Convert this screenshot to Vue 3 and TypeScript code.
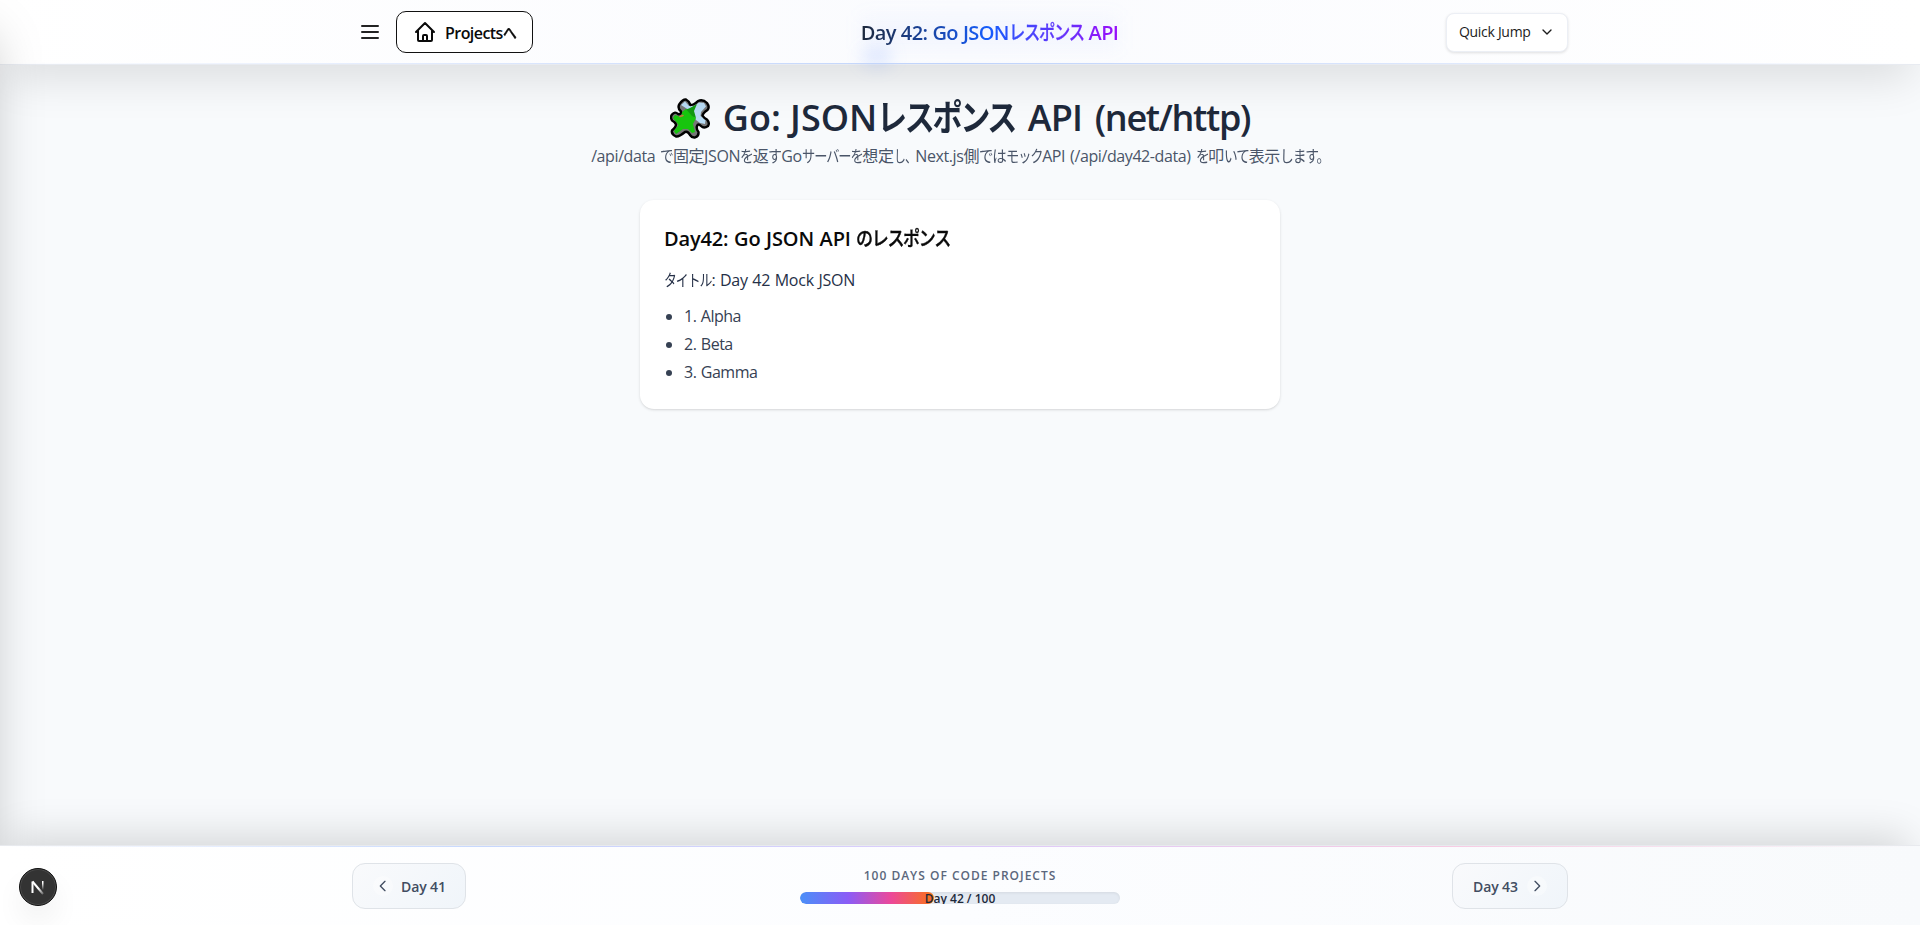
<script setup lang="ts">
import { h, type FunctionalComponent } from 'vue'

// Condensed kana run: glyphs are tightened and narrowed, `scale` is the final advance in em.
const TIGHT = 0.92
const Kana: FunctionalComponent<{ text: string; scale?: number }> = (props) => {
  const scale = props.scale ?? 0.79
  return h('span', {
    class: 'kana',
    style: {
      transform: `scaleX(${(scale / TIGHT).toFixed(3)})`,
      marginRight: `${(-(TIGHT - scale) * props.text.length).toFixed(3)}em`,
    },
  }, props.text)
}
Kana.props = { text: String, scale: Number }

const current = 42
const total = 100
const items = [
  { id: 1, name: 'Alpha' },
  { id: 2, name: 'Beta' },
  { id: 3, name: 'Gamma' },
]
</script>

<template>
  <div class="page">
    <header class="header">
      <div class="bar">
        <div class="left">
          <svg class="menu" viewBox="0 0 24 24"><path d="M4 6h16M4 12h16M4 18h16" /></svg>
          <a class="home">
            <svg viewBox="0 0 24 24"><path d="m3 12 2-2m0 0 7-7 7 7M5 10v10a1 1 0 0 0 1 1h3m10-11 2 2m-2-2v10a1 1 0 0 1-1 1h-3m-6 0a1 1 0 0 0 1-1v-4a1 1 0 0 1 1-1h2a1 1 0 0 1 1 1v4a1 1 0 0 0 1 1m-6 0h6" /></svg>
            <span class="home-text">Projects<Kana text="へ" /></span>
          </a>
        </div>
        <h1 class="brand"><span class="brand-a">Day 42: Go JSON</span><Kana class="brand-b" text="レスポンス" :scale="0.75" /><span class="brand-c">&nbsp;API</span></h1>
        <button class="jump"><span>Quick Jump</span><svg viewBox="0 0 24 24"><path d="m6 9 6 6 6-6" /></svg></button>
      </div>
    </header>
    <aside class="drawer"></aside>

    <main class="main">
      <h2 class="title">
        <svg class="puzzle" viewBox="0 0 40 41">
          <path class="side" d="M9.500 6Q13 1 16 1.500Q19 3 20.500 7Q24 7 28 3Q33 1 37 5Q40 9 37.500 12Q33 15 32.500 17.500Q34 20 37 21.500Q40 25 38 28Q34 31 31 28Q28 25 27 28Q26 31 28.500 34Q29 38 25 39.500Q22 40 20 37Q18 33 15 34Q9 39 6 38.500Q1 36 2 32.500Q6 29 6 26.500Q5 24 2 22.500Q0 19 2 16.500Q5 13 8 16Q11 17 11 13.500Q7 10 9.500 6Z" />
          <path class="sky" d="M11 7L15 3.500L19 8L24 8L29 4.500L34 5L36 8.500L31 14L30.500 18L35.500 22L35 26L30 25L26 22L22 14Z" />
          <path class="face-dark" d="M20 10L27 6L24 13L26 20L20 18L15 12Z" />
          <path class="face" d="M12 14L16 11L22 18L26 20L23 26L25 34L22 35L18 31L13 31L6 36L4 33L8.500 27L3 20L5 17L11 19Z" />
          <path class="dot" d="M10 18.500L13 17.500" />
          <path class="edge" d="M9.500 6Q13 1 16 1.500Q19 3 20.500 7Q24 7 28 3Q33 1 37 5Q40 9 37.500 12Q33 15 32.500 17.500Q34 20 37 21.500Q40 25 38 28Q34 31 31 28Q28 25 27 28Q26 31 28.500 34Q29 38 25 39.500Q22 40 20 37Q18 33 15 34Q9 39 6 38.500Q1 36 2 32.500Q6 29 6 26.500Q5 24 2 22.500Q0 19 2 16.500Q5 13 8 16Q11 17 11 13.500Q7 10 9.500 6Z" />
        </svg>
        <span>Go: JSON<Kana text="レスポンス" :scale="0.77" /><span class="tight"> API <span class="tighter">(net/http)</span></span></span>
      </h2>
      <p class="lead">/api/data <Kana text="で" />固定JSON<Kana text="を" />返<Kana text="す" :scale="0.8" />Go<Kana text="サーバーを" :scale="0.76" />想定<Kana text="し、" :scale="0.68" />Next.js側<Kana text="では" :scale="0.83" /><Kana text="モック" :scale="0.76" />API (/api/day42-data) <Kana text="を" />叩<Kana text="いて" />表示<Kana text="します。" /></p>
      <section class="card">
        <h3 class="card-title">Day42: Go JSON API <Kana text="のレスポンス" :scale="0.785" /></h3>
        <p class="card-text"><Kana text="タイトル" :scale="0.74" />: Day 42 Mock JSON</p>
        <ul class="list">
          <li v-for="item in items" :key="item.id">{{ item.id }}. {{ item.name }}</li>
        </ul>
      </section>
    </main>

    <footer class="footer">
      <div class="foot">
        <a class="nav prev"><i><svg viewBox="0 0 24 24"><path d="m15 19-7-7 7-7" /></svg></i><span>Day 41</span></a>
        <div class="progress">
          <p class="caption">100 DAYS OF CODE PROJECTS</p>
          <div class="track">
            <div class="fill" :style="{ width: (current / total) * 100 + '%' }"></div>
            <span class="count">Day {{ current }} / {{ total }}</span>
          </div>
        </div>
        <a class="nav next"><span>Day 43</span><i><svg viewBox="0 0 24 24"><path d="m9 5 7 7-7 7" /></svg></i></a>
      </div>
    </footer>
    <div class="next-badge">
      <svg viewBox="0 0 38 38">
        <defs>
          <linearGradient id="stem" x1="0" y1="12" x2="0" y2="22" gradientUnits="userSpaceOnUse"><stop offset="0.3" stop-color="#fff" /><stop offset="1" stop-color="#fff" stop-opacity="0" /></linearGradient>
          <linearGradient id="diag" x1="20" y1="20" x2="25" y2="26" gradientUnits="userSpaceOnUse"><stop offset="0" stop-color="#fff" /><stop offset="1" stop-color="#fff" stop-opacity="0.2" /></linearGradient>
        </defs>
        <path d="M13.500 25V13.500" stroke="#fff" /><path d="M13.500 13.500L24 26" stroke="url(#diag)" /><path d="M23 13h1.500v9h-1.500z" fill="url(#stem)" stroke="none" />
      </svg>
    </div>
  </div>
</template>

<style>
body { margin: 0; background: #f8fafc; overflow: hidden; }
</style>
<style scoped>
* { box-sizing: border-box; margin: 0; padding: 0; }
.page { height: 925px; display: flex; flex-direction: column; position: relative; overflow: hidden; background: #f8fafc; font-family: "Open Sans", "Noto Sans CJK JP", sans-serif; }
svg { fill: none; stroke: currentColor; stroke-width: 2; stroke-linecap: round; stroke-linejoin: round; flex: none; }
.kana { display: inline-block; transform-origin: left; letter-spacing: -.08em; }

.header { height: 65px; flex: none; background: linear-gradient(90deg, #fff, #fafbfe 50%, #fff); border-bottom: 1px solid #e8ebf1; position: relative; z-index: 2; box-shadow: 0 20px 45px -8px rgba(0, 0, 0, .125); }
.header::after { content: ""; position: absolute; left: 0; right: 0; bottom: 0; height: 1px; background: linear-gradient(90deg, transparent, #bfd3fb 50%, transparent); }
.bar { width: 1216px; height: 64px; margin: 0 auto; display: flex; align-items: center; justify-content: space-between; }
.left { display: flex; align-items: center; gap: 14px; }
.menu { width: 24px; height: 24px; margin-left: 6px; color: #222; }
.home { height: 42px; width: 137px; border: 1px solid #111; border-radius: 10px; background: #fff; display: flex; align-items: center; padding-left: 16px; gap: 8px; font-size: 16px; font-weight: 600; color: #0a0a0a; }
.home svg { width: 24px; height: 24px; }
.home-text { white-space: nowrap; letter-spacing: -.55px; }
.home-text .kana { font-weight: 500; -webkit-text-stroke: .3px #0a0a0a; }
.brand { font-size: 20px; line-height: 28px; padding-top: 1px; font-weight: 600; white-space: nowrap; letter-spacing: -.62px; word-spacing: .5px; position: relative; color: transparent; }
.brand::before { content: ""; position: absolute; left: 0; top: 28px; width: 32px; height: 22px; border-radius: 50%; background: rgba(96, 140, 255, .15); filter: blur(8px); }
.brand::after { content: ""; position: absolute; inset: -2px 0; z-index: -1; background: rgba(120, 160, 255, .05); filter: blur(9px); }
.brand-a, .brand-b, .brand-c { background-clip: text; -webkit-background-clip: text; color: transparent; }
.brand-a { background-image: linear-gradient(90deg, #1e293b, #155dfc 86%, #2a51fc); }
.brand-b { background-image: linear-gradient(90deg, #3450fc, #7624fb); font-weight: 500; -webkit-text-stroke: .3px transparent; }
.brand-c { background-image: linear-gradient(90deg, #7f20fb, #9810fa); }
.jump { width: 122px; height: 39px; border: 1px solid #eceff5; border-radius: 8px; background: #fff; display: flex; align-items: center; justify-content: space-between; padding: 0 12px 1px; font: 14px "Open Sans", sans-serif; letter-spacing: -.3px; color: #1c1c1c; white-space: nowrap; box-shadow: 0 1px 3px rgba(0, 0, 0, .12); }
.jump svg { width: 16px; height: 16px; }

.drawer { position: absolute; left: -320px; top: 0; width: 320px; height: 925px; z-index: 3; box-shadow: 0 25px 50px -12px rgba(0, 0, 0, .26); }

.main { flex: 1; display: flex; flex-direction: column; align-items: center; padding-top: 31px; }
.title { font-size: 36px; line-height: 44px; font-weight: 600; color: #1e293b; display: flex; align-items: center; gap: 13px; white-space: nowrap; }
.title .kana { line-height: 44px; }
.tight { letter-spacing: -.8px; word-spacing: 4px; }
.tighter { letter-spacing: -1.3px; }
.puzzle { width: 40px; height: 41px; }
.side { fill: #777; stroke: none; }
.sky { fill: #b7daf3; stroke: none; }
.face { fill: #17c50e; stroke: none; }
.face-dark { fill: #119a12; stroke: none; }
.dot { stroke: #c77b3c; stroke-width: 1.5; }
.edge { stroke: #000; stroke-width: 2.4; }
.lead { font-size: 16px; line-height: 24px; letter-spacing: -.4px; word-spacing: 1.2px; color: #4a5568; white-space: nowrap; margin-top: 4px; font-weight: 400; }
.card { width: 640px; height: 209px; flex: none; margin-top: 32px; padding: 25px 24px 24px; background: #fff; border-radius: 14px; box-shadow: 0 1px 3px rgba(0, 0, 0, .12), 0 1px 2px -1px rgba(0, 0, 0, .1); }
.card-title { font-size: 20px; line-height: 28px; font-weight: 600; letter-spacing: -.15px; word-spacing: .6px; color: #0a0a0a; }
.card-title .kana { font-weight: 500; -webkit-text-stroke: .35px #0a0a0a; }
.card-text { margin-top: 15px; font-size: 16px; line-height: 24px; letter-spacing: -.25px; word-spacing: .7px; color: #253047; }
.list { margin-top: 12px; font-size: 16px; line-height: 24px; padding-left: 20px; letter-spacing: -.5px; word-spacing: .8px; color: #364153; }
.list li + li { margin-top: 4px; }

.footer { height: 80px; flex: none; background: linear-gradient(90deg, #fff, #fcfdff 50%, #f8fafc); border-top: 1px solid #e8eaee; position: relative; z-index: 4; box-shadow: 0 -20px 40px -12px rgba(0, 0, 0, .15); }
.footer::before { content: ""; position: absolute; left: 0; right: 0; top: 0; height: 1px; background: linear-gradient(90deg, transparent, #c7d8fd 25%, #dccbfb 50%, #f6cbe3 75%, transparent); }
.foot { width: 1216px; height: 80px; margin: 0 auto; display: flex; justify-content: space-between; align-items: center; }
.nav { width: 114px; height: 46px; border: 1px solid #dfe3e8; border-radius: 13px; display: flex; align-items: center; font-size: 14px; font-weight: 600; letter-spacing: -.1px; color: #414d61; background: linear-gradient(135deg, #f9fafc, #f0f5fa); white-space: nowrap; }
.nav i { width: 20px; height: 20px; border-radius: 50%; background: rgba(255, 255, 255, .35); display: grid; place-items: center; }
.nav svg { width: 16px; height: 16px; }
.prev { padding-left: 20px; gap: 8px; }
.next { width: 116px; padding-left: 20px; gap: 9px; }
.progress { width: 320px; margin-left: 2px; text-align: center; }
.caption { font-size: 12px; line-height: 16px; font-weight: 600; letter-spacing: 1px; white-space: nowrap; color: #5b677c; margin-bottom: 8px; }
.track { height: 12px; border-radius: 6px; background: #e4eaf2; box-shadow: inset 0 1px 3px rgba(0, 0, 0, .07); position: relative; overflow: hidden; }
.fill { height: 12px; border-radius: 6px; background: linear-gradient(90deg, #4a8ff8, #8b5cf6 36%, #ec4899 68%, #f97316); }
.count { position: absolute; inset: 0; font-size: 12px; line-height: 14px; font-weight: 600; color: #1e293b; }

.next-badge { position: absolute; z-index: 5; left: 19px; top: 868px; width: 38px; height: 38px; border-radius: 50%; background: #333; border: 1px solid #111; box-shadow: inset 0 0 0 1px #4a4a4a, 0 16px 32px -8px rgba(0, 0, 0, .16); }
.next-badge svg { display: block; width: 38px; height: 38px; margin: -1px; stroke-width: 2; stroke-linecap: butt; stroke-linejoin: miter; }
</style>
